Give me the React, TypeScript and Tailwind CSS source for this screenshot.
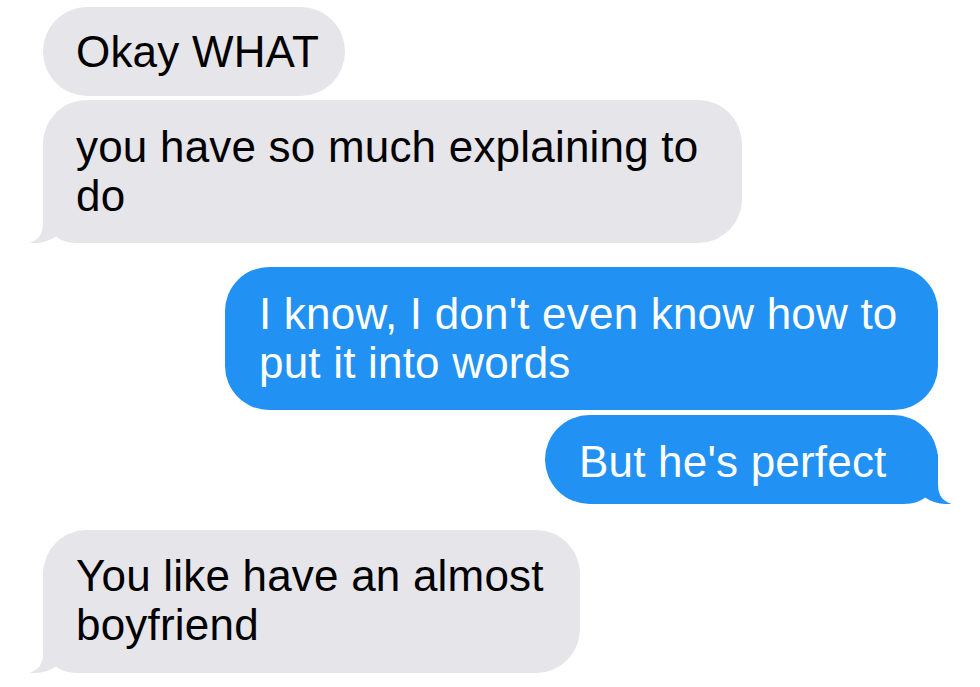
import React from "react";

const GRAY = "#e5e5ea";
const BLUE = "#2191f3";

function Tail({ color, side }: { color: string; side: "left" | "right" }) {
  return (
    <svg
      width="80"
      height="50"
      viewBox="0 0 80 50"
      className={
        side === "left"
          ? "absolute left-[-14px] bottom-0"
          : "absolute right-[-14px] bottom-0 -scale-x-100"
      }
    >
      <path
        d="M14,0 L14,30 C14,42 9,47 0.5,50 C9,50.5 19,49 27,43.5 C32,47.5 39,49.8 48,50 L80,50 L80,0 Z"
        fill={color}
      />
    </svg>
  );
}

export default function App() {
  return (
    <div className="w-[980px] h-[687px] bg-white overflow-hidden font-['Liberation_Sans',Arial,sans-serif] text-[44px] leading-[49px] tracking-[0.2px]">
      <div className="flex flex-col pt-[7px] pl-[43px] pr-[42px]">
        <div className="self-start w-[302px] rounded-[45px] bg-[#e5e5ea] text-black pl-[33px] pt-[20px] pb-[20px] whitespace-nowrap">
          Okay WHAT
        </div>

        <div className="relative self-start mt-[4px] w-[699px] rounded-[44px] bg-[#e5e5ea] text-black pl-[33px] pt-[22px] pb-[23px] whitespace-nowrap">
          <span className="relative z-10">
            you have so much explaining to
            <br />
            do
          </span>
          <Tail color={GRAY} side="left" />
        </div>

        <div className="self-end mt-[24px] w-[713px] rounded-[44px] bg-[#2191f3] text-white pl-[34px] pt-[22px] pb-[23px] whitespace-nowrap">
          I know, I don't even know how to
          <br />
          put it into words
        </div>

        <div className="relative self-end mt-[5px] w-[393px] rounded-[45px] bg-[#2191f3] text-white pl-[34px] pt-[22px] pb-[18px] whitespace-nowrap">
          <span className="relative z-10">But he's perfect</span>
          <Tail color={BLUE} side="right" />
        </div>

        <div className="relative self-start mt-[26px] w-[537px] rounded-[44px] bg-[#e5e5ea] text-black pl-[33px] pt-[21px] pb-[24px] whitespace-nowrap">
          <span className="relative z-10">
            You like have an almost
            <br />
            boyfriend
          </span>
          <Tail color={GRAY} side="left" />
        </div>
      </div>
    </div>
  );
}
